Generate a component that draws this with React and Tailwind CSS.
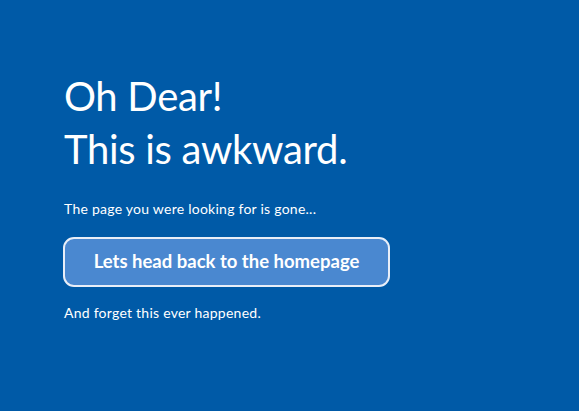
export default function App() {
  return (
    <div
      className="w-[579px] h-[411px] bg-[#005aa7] text-white overflow-hidden"
      style={{ fontFamily: 'Lato, "Noto Sans", sans-serif' }}
    >
      <div className="pl-[64px] pt-[70px]">
        <h1 className="text-[40px] leading-[53px] font-normal tracking-[-0.3px]">
          Oh Dear!
          <br />
          This is awkward.
        </h1>
        <p className="mt-[24px] text-[14px] leading-[18px] tracking-[0.25px]">The page you were looking for is gone...</p>
        <button className="mt-[19px] -ml-px w-[327px] h-[50px] rounded-[11px] border-2 border-[#e8eef8] bg-[#4a88d0] text-[18.5px] font-bold">
          Lets head back to the homepage
        </button>
        <p className="mt-[17px] text-[14px] leading-[18px] tracking-[0.25px]">And forget this ever happened.</p>
      </div>
    </div>
  );
}
